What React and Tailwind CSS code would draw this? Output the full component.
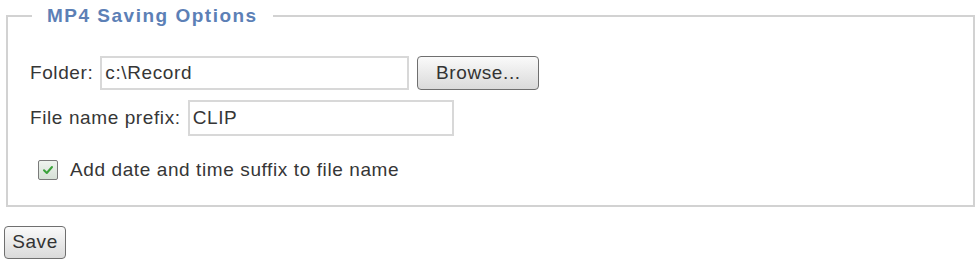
import React from "react";

function Check() {
  return (
    <span className="flex h-5 w-5 items-center justify-center rounded-[2px] border border-[#7a7a7a] bg-gradient-to-b from-[#eef3ee] to-[#d6e0d6]">
      <svg viewBox="0 0 12 12" className="h-3 w-3">
        <path d="M2 6.2 L4.8 9 L10 3" fill="none" stroke="#3aa23a" strokeWidth="2" strokeLinecap="round" strokeLinejoin="round" />
      </svg>
    </span>
  );
}

const btn =
  "rounded-[4px] border border-[#6f6f6f] bg-gradient-to-b from-[#fafafa] to-[#dadada] text-[19px] tracking-[0.6px] text-[#333]";

export default function App() {
  return (
    <div className="h-[262px] bg-white text-[#363636] text-[19px] tracking-[0.6px]" style={{ fontFamily: "'Liberation Sans', Arial, sans-serif" }}>
      <div className="pl-[6px] pr-px pt-[5px]">
        <fieldset className="border-2 border-[#d2d2d2] pb-[20px] pl-[22px] pr-4">
          <legend className="ml-[2px] px-[15px] text-[19px] font-bold leading-[22px] tracking-[1.5px] text-[#5c80b6]">MP4 Saving Options</legend>

          <div className="mt-[29px] flex items-center">
            <span>Folder:</span>
            <div className="ml-[7px] flex h-[34px] w-[309px] items-center border-2 border-[#d8d8d8] px-[3px]">c:\Record</div>
            <button className={`${btn} ml-[8px] h-[34px] w-[122px]`}>Browse...</button>
          </div>

          <div className="mt-[10px] flex items-center">
            <span>File name prefix:</span>
            <div className="ml-[7px] flex h-[36px] w-[266px] items-center border-2 border-[#d8d8d8] px-[3px]">CLIP</div>
          </div>

          <label className="ml-[8px] mt-[20px] flex items-center gap-[12px]">
            <Check />
            <span>Add date and time suffix to file name</span>
          </label>
        </fieldset>
      </div>

      <div className="pl-[4px] pt-[19px]">
        <button className={`${btn} h-[33px] w-[62px]`}>Save</button>
      </div>
    </div>
  );
}
